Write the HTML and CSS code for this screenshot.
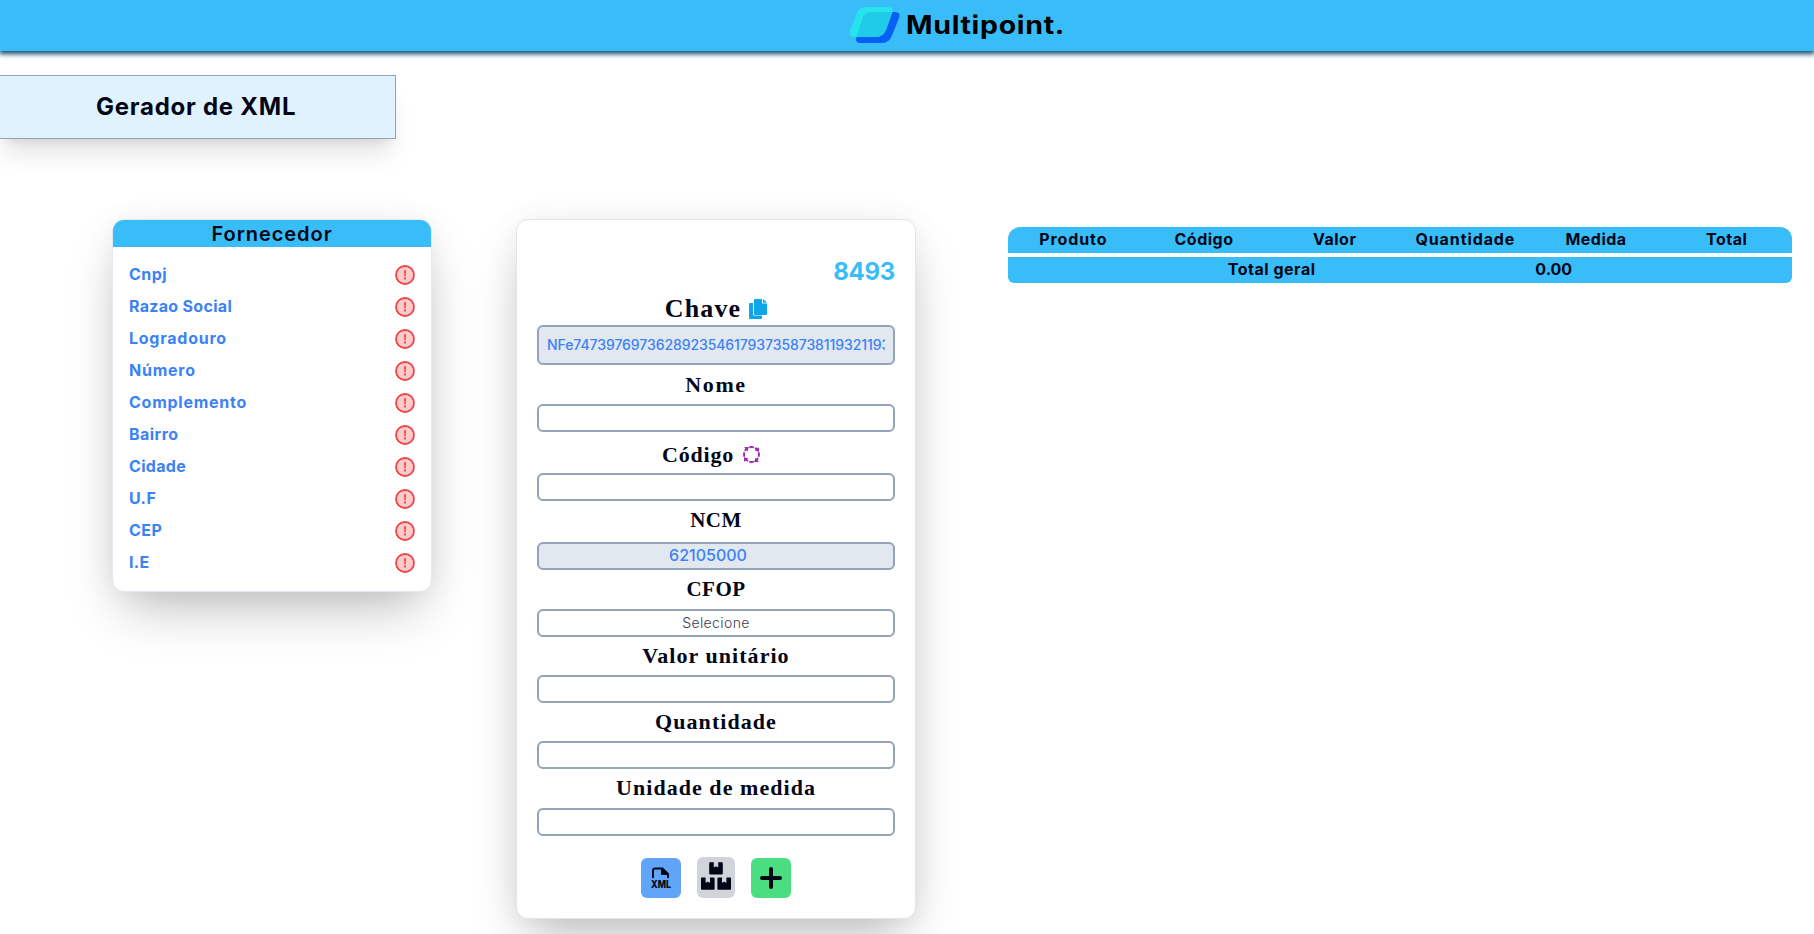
FILE: index.html
```html
<!DOCTYPE html>
<html lang="pt-BR">
<head>
<meta charset="utf-8">
<title>Multipoint - Gerador de XML</title>
<link rel="stylesheet" href="styles.css">
</head>
<body>
<svg class="sprite" aria-hidden="true">
  <symbol id="alert" viewBox="0 0 20 20"><circle cx="10" cy="10" r="9" fill="#fecaca" stroke="#ef4444" stroke-width="1.8"/><path d="M9.100 5.200h1.900l-.3 6.300h-1.300zM9.100 12.600h1.900v1.900h-1.900z" fill="#ef4444"/></symbol>
</svg>
<header class="topbar">
  <svg class="logo" viewBox="0 0 52 38" width="52" height="38">
    <path d="M18.500 6H46q6 0 4 6L43 29.500Q40 37 33 37H12Q5.500 37 7.500 31L13.500 13Q15 6 18.500 6z" fill="#0660f4"/>
    <path d="M16.500 1H39q6 0 4 6L37 24Q34 31 27 31H6Q-.5 31 1 25L7.500 8Q10 1 16.500 1z" fill="#26e3ec"/>
    <path d="M22 6H43.300L37 24Q34 31 27 31H7.500L13 14Q15 6 22 6z" fill="#1fcbe8"/>
  </svg>
  <span class="brand">Multipoint.</span>
</header>
<h1 class="page-title"><span>Gerador de XML</span></h1>
<main class="content">
  <section class="supplier">
    <h2 class="supplier-head">Fornecedor</h2>
    <ul class="supplier-list">
      <li><span>Cnpj</span><svg><use href="#alert"/></svg></li>
      <li class="snug"><span>Razao Social</span><svg><use href="#alert"/></svg></li>
      <li class="loose"><span>Logradouro</span><svg><use href="#alert"/></svg></li>
      <li class="loose"><span>Número</span><svg><use href="#alert"/></svg></li>
      <li class="loose"><span>Complemento</span><svg><use href="#alert"/></svg></li>
      <li><span>Bairro</span><svg><use href="#alert"/></svg></li>
      <li class="snug"><span>Cidade</span><svg><use href="#alert"/></svg></li>
      <li><span>U.F</span><svg><use href="#alert"/></svg></li>
      <li><span>CEP</span><svg><use href="#alert"/></svg></li>
      <li class="snug"><span>I.E</span><svg><use href="#alert"/></svg></li>
    </ul>
  </section>
  <form class="product">
    <div class="serial">8493</div>
    <div class="label label-key"><span>Chave</span>
      <svg width="18" height="20" viewBox="0 0 18 20" fill="#0ea5e9"><path d="M0 5q0-1 1-1h3v11q0 1.500 1.500 1.500H13V19q0 1-1 1H1q-1 0-1-1z"/><path d="M6 0h7v4.500h5V15q0 1-1 1H6q-1 0-1-1V1q0-1 1-1zM14 0l4 3.700h-4z"/></svg>
    </div>
    <div class="field key"><div class="key-value">NFe747397697362892354617937358738119321193</div></div>
    <div class="label nome"><span>Nome</span></div>
    <div class="field"></div>
    <div class="label codigo"><span>Código</span>
      <svg width="17" height="17" viewBox="0 0 17 17" fill="none" stroke="#9c27b0" stroke-width="1.900"><path d="M6.200 1.400q2.300-.7 4.600 0M6.200 15.600q2.300.7 4.600 0M1.400 6.200q-.7 2.300 0 4.600M15.600 6.200q.7 2.300 0 4.600M1.800 4.800l1.800-2M12.200 1.800l2 1.800M15.200 12.200l-1.800 2M4.800 15.200l-2-1.800"/><path d="M1.200 1h4.600L4.400 5.400zM16 1.200v4.600l-4.400-1.400zM15.800 16h-4.600l1.400-4.400zM1 15.800v-4.600l4.400 1.400z" fill="#9c27b0" stroke="none"/></svg>
    </div>
    <div class="field"></div>
    <div class="label ncm"><span>NCM</span></div>
    <div class="field filled">62105000</div>
    <div class="label cfop"><span>CFOP</span></div>
    <div class="field select">Selecione</div>
    <div class="label valor"><span>Valor unitário</span></div>
    <div class="field"></div>
    <div class="label quant"><span>Quantidade</span></div>
    <div class="field"></div>
    <div class="label unidade"><span>Unidade de medida</span></div>
    <div class="field"></div>
    <div class="actions">
      <button type="button" class="btn blue"><svg class="file-icon" width="22" height="22" viewBox="0 0 22 22"><path d="M3 11V3.500q0-2 2-2h7.500L18 7v4M12 1.500V7h6" fill="none" stroke="#020617" stroke-width="1.900"/><path d="M12 1.500L18 7h-6z" fill="#020617"/><text x="1" y="20.800" textLength="20" lengthAdjust="spacingAndGlyphs" class="file-type">XML</text></svg></button>
      <button type="button" class="btn gray"><svg width="30" height="28" viewBox="0 0 30 28" fill="#020617"><path id="box" d="M9 .2h3.800v5.200L15 4.300l2.200 1.100V.2H21q.8 0 .8.800v10.600q0 .8-.8.800H9q-.8 0-.8-.8V1q0-.8.800-.8z"/><use href="#box" x="-8.200" y="15.400"/><use href="#box" x="8.200" y="15.400"/></svg></button>
      <button type="button" class="btn green"><svg width="22" height="22" viewBox="0 0 22 22" stroke="#020617" stroke-width="4" stroke-linecap="round"><path d="M11 2v18M2 11h18"/></svg></button>
    </div>
  </form>
  <section class="items">
    <div class="items-head"><span class="loose">Produto</span><span>Código</span><span>Valor</span><span class="loose">Quantidade</span><span>Medida</span><span>Total</span></div>
    <div class="items-total"><span>Total geral</span><span class="amount">0.00</span></div>
  </section>
</main>
</body>
</html>
```
FILE: styles.css
```css
* { box-sizing: border-box; }
html, body { height: 100%; }
body { margin: 0; overflow: hidden; background: #fff; color: #020617; font-family: Inter, "Liberation Sans", sans-serif; }
.sprite { position: absolute; width: 0; height: 0; }
.topbar { display: flex; justify-content: center; gap: 5px; height: 51px; padding: 6px 0 0 98px; background: #38bdf8; box-shadow: 0 2px 5px 1px #0c4a6e; }
.logo { flex: none; }
.brand { color: #000; font-size: 25px; font-weight: 700; line-height: 38px; width: 157px; white-space: nowrap; letter-spacing: .6px; transform: scaleX(1.14); transform-origin: left; }
.page-title { display: flex; align-items: center; width: 396px; height: 64px; margin: 24px 0 0; padding-left: 96px; background: #e0f2fe; border: 1px solid #94a3b8; border-left: 0; box-shadow: 0 20px 25px -5px rgba(0,0,0,.1), 0 8px 10px -6px rgba(0,0,0,.1); font-size: 24px; font-weight: 650; line-height: 32px; letter-spacing: .75px; white-space: nowrap; }
.content { display: flex; align-items: flex-start; margin-top: 80px; padding-left: 112px; }
.supplier { flex: none; width: 320px; height: 373px; border: 1px solid #e2e8f0; border-radius: 12px; background: #fff; overflow: hidden; box-shadow: 0 25px 50px -12px rgba(0,0,0,.27), 0 0 30px rgba(0,0,0,.05); }
.supplier-head { margin: 0; height: 27px; background: #38bdf8; text-align: center; font-size: 20px; font-weight: 600; line-height: 28px; letter-spacing: .95px; }
.supplier-list { list-style: none; margin: 0; padding: 12px 16px 0; }
.supplier-list li { display: flex; justify-content: space-between; align-items: center; height: 32px; color: #3b82f6; font-size: 16px; font-weight: 700; letter-spacing: .45px; line-height: 20px; }
.supplier-list li span { padding-bottom: 2px; }
.supplier-list li.snug { letter-spacing: .3px; }
.supplier-list li.loose { letter-spacing: .75px; }
.supplier-list svg { width: 20px; height: 20px; }
.product { flex: none; display: flex; flex-direction: column; width: 400px; height: 700px; margin-left: 84px; padding: 35px 20px 0; border: 1px solid #e5e5e5; border-radius: 12px; background: #fff; box-shadow: 0 25px 50px -12px rgba(0,0,0,.27), 0 0 30px rgba(0,0,0,.05); }
.serial { height: 34px; color: #38bdf8; text-align: right; font-size: 24px; font-weight: 700; line-height: 34px; letter-spacing: -.3px; }
.label { display: flex; justify-content: center; align-items: center; font-family: "Liberation Serif", serif; font-weight: 700; font-size: 22px; line-height: 28px; letter-spacing: 1.05px; white-space: nowrap; }
.label-key { gap: 8px; height: 36px; padding-top: 4px; font-size: 26px; letter-spacing: 1.1px; }
.nome { height: 39px; letter-spacing: 1.6px; }
.codigo { gap: 9px; height: 41px; padding: 4px 10px 0 0; letter-spacing: .8px; }
.ncm { height: 41px; padding-bottom: 4px; font-size: 21px; letter-spacing: .5px; }
.cfop { height: 39px; padding-bottom: 2px; font-size: 21px; letter-spacing: .5px; }
.valor { height: 38px; padding-bottom: 1px; }
.quant { height: 38px; padding-bottom: 1px; }
.unidade { height: 39px; padding-bottom: 2px; }
.field { height: 28px; flex: none; border: 2px solid #94a3b8; border-radius: 6px; background: #fff; line-height: 24px; text-align: center; }
.key { height: 40px; padding: 0 8px; background: #e2e8f0; color: #3b82f6; line-height: 35px; font-size: 14px; font-weight: 500; text-align: left; }
.key-value { overflow: hidden; white-space: nowrap; letter-spacing: -.08px; }
.filled { background: #e2e8f0; color: #3b82f6; font-size: 16px; font-weight: 500; padding-right: 16px; line-height: 23px; }
.select { color: #374151; font-size: 14px; font-weight: 300; letter-spacing: .4px; }
.actions { display: flex; justify-content: center; align-items: flex-end; gap: 16px; height: 62px; }
.btn { display: flex; justify-content: center; align-items: center; width: 40px; height: 40px; padding: 0; border: 0; border-radius: 6px; }
.blue { background: #60a5fa; }
.file-icon { overflow: visible; }
.file-type { font: 800 10px Inter, sans-serif; fill: #020617; }
.gray { width: 38px; height: 41px; background: #d1d5db; padding-bottom: 4px; }
.green { background: #4ade80; }
.items { flex: none; width: 784px; margin: 8px 0 0 92px; font-size: 16px; font-weight: 650; line-height: 24px; letter-spacing: .5px; }
.items .loose { letter-spacing: .9px; }
.items .amount { letter-spacing: 0; }
.items-head { display: grid; grid-template-columns: repeat(6, 1fr); height: 26px; background: #38bdf8; border-radius: 12px 12px 0 0; text-align: center; }
.items-total { display: flex; justify-content: space-evenly; height: 26px; margin-top: 4px; background: #38bdf8; border-radius: 0 0 6px 6px; }
```
